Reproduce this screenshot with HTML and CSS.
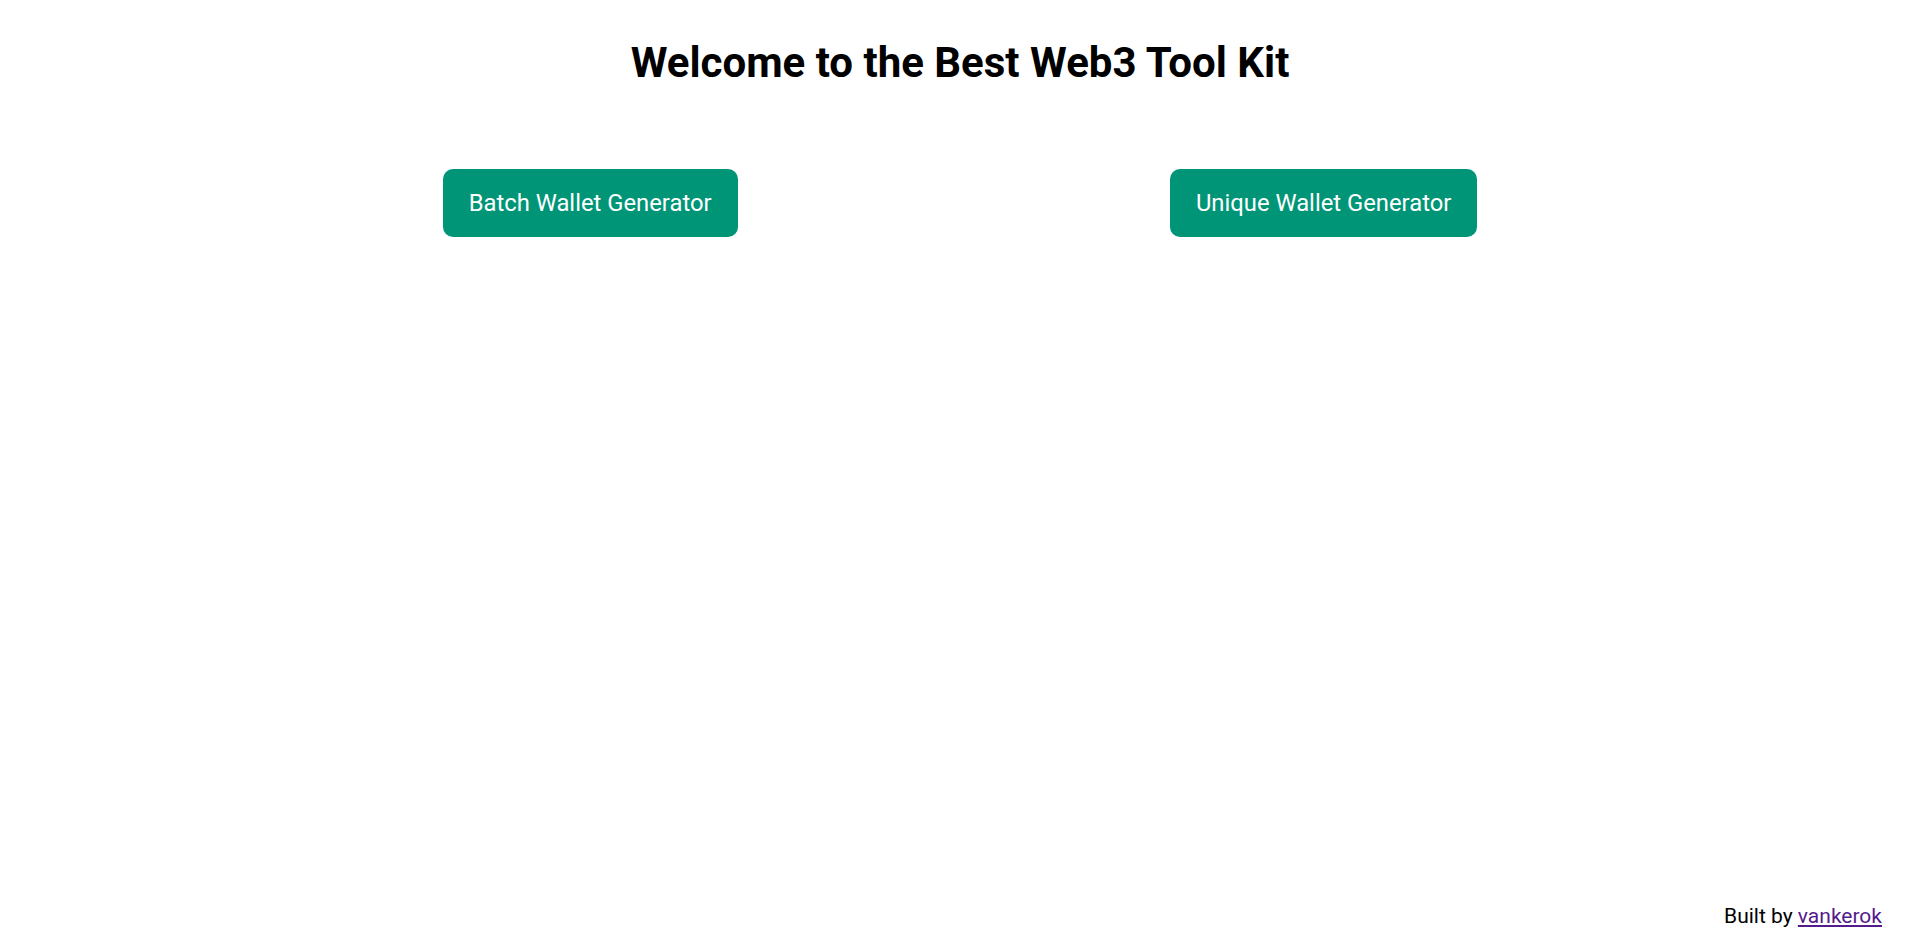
FILE: index.html
```html
<!DOCTYPE html>
<html lang="en">
<head>
<meta charset="utf-8">
<title>Web3 Tool Kit</title>
<link rel="stylesheet" href="styles.css">
</head>
<body>
<main class="page">
  <h1 class="title">Welcome to the Best Web3 Tool Kit</h1>
  <div class="actions">
    <button class="btn">Batch Wallet Generator</button>
    <button class="btn">Unique Wallet Generator</button>
  </div>
</main>
<footer class="footer">Built by <a class="footer-link" href="#">vankerok</a></footer>
</body>
</html>
```

FILE: styles.css
```css
html, body {
  margin: 0;
  padding: 0;
  height: 100%;
}
body {
  font-family: Roboto, "Liberation Sans", sans-serif;
  background: #ffffff;
  color: #000000;
  display: flex;
  flex-direction: column;
  min-height: 100vh;
  box-sizing: border-box;
}
.page {
  flex: 1;
  display: flex;
  flex-direction: column;
  align-items: center;
}
.title {
  margin: 38px 0 0 0;
  font-size: 42px;
  font-weight: 700;
  line-height: 49px;
  text-align: center;
}
.actions {
  margin-top: 82px;
  width: 1467px;
  display: flex;
  justify-content: space-around;
}
.btn {
  font-family: Roboto, "Liberation Sans", sans-serif;
  font-size: 23.8px;
  line-height: 28px;
  padding: 20px 26px;
  background: #009577;
  color: #ffffff;
  border: none;
  border-radius: 10px;
  cursor: pointer;
}
.footer {
  text-align: right;
  font-size: 21px;
  line-height: 25px;
  padding: 0 38px 18px 0;
}
.footer-link {
  color: #551a8b;
}
```
